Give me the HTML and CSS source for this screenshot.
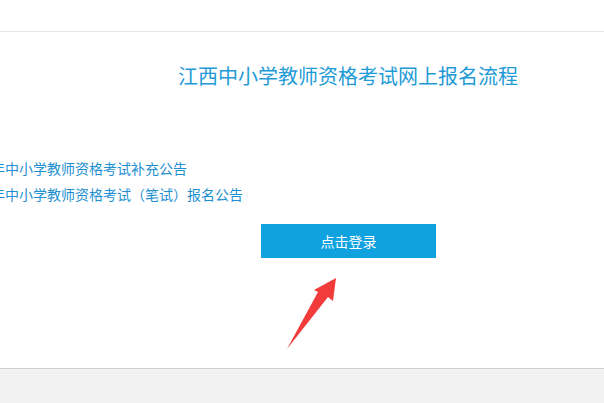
FILE: index.html
```html
<!DOCTYPE html>
<html lang="zh-CN">
<head>
    <meta charset="UTF-8">
    <meta name="viewport" content="width=device-width, initial-scale=1.0">
    <title>网上报名流程</title>
    <link rel="stylesheet" href="styles.css">
</head>
<body>
    <div class="top"></div>
    <div class="main">
        <h2 class="title">江西中小学教师资格考试网上报名流程</h2>
        <ul class="notices">
            <li><a href="#">江西省2019年中小学教师资格考试补充公告</a></li>
            <li><a href="#">江西省2019年中小学教师资格考试（笔试）报名公告</a></li>
        </ul>
        <div class="login-row">
            <button class="login-btn">点击登录</button>
        </div>
        <svg class="arrow" width="60" height="80" viewBox="0 0 60 80">
            <!-- 红色指示箭头 -->
            <polygon points="54,4 51,27 46,23 5,75 36,18 32,16" fill="#f23b3b"/>
        </svg>
    </div>
    <div class="footer"></div>
</body>
</html>
```
FILE: styles.css
```css
html, body {
    margin: 0;
    padding: 0;
    overflow: hidden;
}
body {
    font-family: "Microsoft YaHei", "Noto Sans CJK SC", sans-serif;
    background-color: #fff;
    width: 604px;
    height: 403px;
}
.top {
    height: 31px;
    border-bottom: 1px solid #e6e6e6;
}
.main {
    position: relative;
    height: 336px;
}
.title {
    margin: 0;
    padding: 34px 0 0 178px;
    font-size: 20px;
    line-height: 20px;
    font-weight: normal;
    color: #1e9ad6;
    white-space: nowrap;
}
.notices {
    list-style: none;
    margin: 69px 0 0 -82px;
    padding: 0;
}
.notices li {
    font-size: 14px;
    line-height: 26px;
    white-space: nowrap;
}
.notices a {
    color: #1d8fd0;
    text-decoration: none;
}
.login-row {
    margin-top: 17px;
    padding-left: 261px;
}
.login-btn {
    width: 175px;
    height: 34px;
    border: none;
    background-color: #0fa2df;
    color: #fff;
    font-family: inherit;
    font-size: 14px;
    cursor: pointer;
}
.arrow {
    position: absolute;
    left: 282px;
    top: 242px;
    overflow: visible;
}
.footer {
    border-top: 1px solid #cfcfcf;
    height: 34px;
    background-color: #f2f2f2;
}
```
